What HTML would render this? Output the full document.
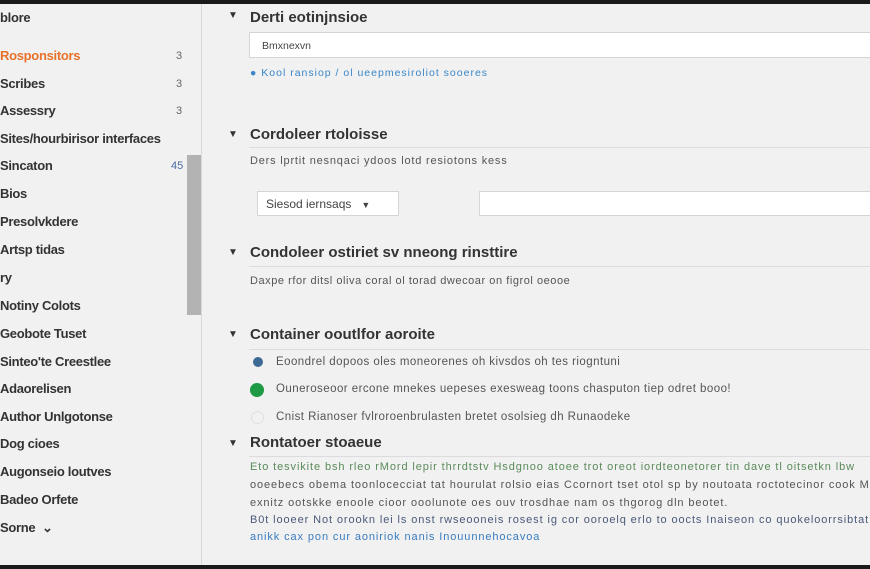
<html><head><style>
*{margin:0;padding:0;box-sizing:border-box}
body{width:870px;height:569px;background:#1a1a1a;font-family:"Liberation Sans",sans-serif;overflow:hidden;position:relative}
.pg{position:absolute;left:0;top:4px;width:870px;height:561px;background:#f1f1f1}
.sb{position:absolute;left:0;top:0;width:202px;height:561px;border-right:1px solid #d8d8d8}
.it{position:absolute;left:0;font-size:13px;color:#333;font-weight:bold;white-space:nowrap;letter-spacing:-0.3px}
.ct{position:absolute;left:176px;font-size:11px;color:#666}
.thumb{position:absolute;left:187px;top:151px;width:14px;height:160px;background:#b3b3b3}
.a{position:absolute;white-space:nowrap}
.h{font-size:15px;font-weight:bold;color:#333;left:250px}
.tri{position:absolute;left:228px;font-size:10px;color:#333}
.hr{position:absolute;left:249px;right:0;height:1px;background:#dcdcdc}
.d{font-size:11px;color:#555;left:250px;letter-spacing:0.8px}
.box{position:absolute;background:#fff;border:1px solid #d5d5d5}
.r{font-size:11.5px;color:#555;left:276px;letter-spacing:0.45px}
.p{font-size:11px;color:#555;left:250px;letter-spacing:0.9px}
</style></head><body><div class="pg">
<div class="sb">
<div class="it" style="top:6px">blore</div>
<div class="it" style="top:44px;color:#e8722a">Rosponsitors</div><div class="ct" style="top:46px">3</div>
<div class="it" style="top:72px">Scribes</div><div class="ct" style="top:74px">3</div>
<div class="it" style="top:99px">Assessry</div><div class="ct" style="top:101px">3</div>
<div class="it" style="top:127px">Sites/hourbirisor interfaces</div>
<div class="it" style="top:154px">Sincaton</div><div class="ct" style="top:156px;left:171px;color:#4b6aa0">45</div>
<div class="it" style="top:182px">Bios</div>
<div class="it" style="top:210px">Presolvkdere</div>
<div class="it" style="top:238px">Artsp tidas</div>
<div class="it" style="top:266px">ry</div>
<div class="it" style="top:294px">Notiny Colots</div>
<div class="it" style="top:322px">Geobote Tuset</div>
<div class="it" style="top:350px">Sinteo'te Creestlee</div>
<div class="it" style="top:377px">Adaorelisen</div>
<div class="it" style="top:405px">Author Unlgotonse</div>
<div class="it" style="top:432px">Dog cioes</div>
<div class="it" style="top:460px">Augonseio loutves</div>
<div class="it" style="top:488px">Badeo Orfete</div>
<div class="it" style="top:516px">Sorne &nbsp;&#8964;</div>
<div class="thumb"></div>
</div>
<div class="tri" style="top:6px">&#9660;</div><div class="a h" style="top:5px">Derti eotinjnsioe</div>
<div class="box" style="left:249px;top:28px;width:625px;height:26px"></div>
<div class="a" style="left:262px;top:36px;font-size:10.5px;color:#444">Bmxnexvn</div>
<div class="a" style="left:250px;top:63px;font-size:10.5px;color:#3a86c8;letter-spacing:1px">&#9679; Kool ransiop / ol ueepmesiroliot sooeres</div>
<div class="tri" style="top:125px">&#9660;</div><div class="a h" style="top:122px">Cordoleer rtoloisse</div>
<div class="hr" style="top:143px"></div>
<div class="a d" style="top:151px">Ders lprtit nesnqaci ydoos lotd resiotons kess</div>
<div class="box" style="left:257px;top:187px;width:142px;height:25px"></div>
<div class="a" style="left:266px;top:193px;font-size:12px;color:#444">Siesod iernsaqs &nbsp;&nbsp;<span style="font-size:9px">&#9660;</span></div>
<div class="box" style="left:479px;top:187px;width:395px;height:25px"></div>
<div class="tri" style="top:243px">&#9660;</div><div class="a h" style="top:240px">Condoleer ostiriet sv nneong rinsttire</div>
<div class="hr" style="top:262px"></div>
<div class="a d" style="top:271px;letter-spacing:0.55px">Daxpe rfor ditsl oliva coral ol torad dwecoar on figrol oeooe</div>
<div class="tri" style="top:325px">&#9660;</div><div class="a h" style="top:322px">Container ooutlfor aoroite</div>
<div class="hr" style="top:345px"></div>
<div class="a" style="left:253px;top:353px;width:10px;height:10px;border-radius:5px;background:#3d6a94"></div>
<div class="a r" style="top:352px">Eoondrel dopoos oles moneorenes oh kivsdos oh tes riogntuni</div>
<div class="a" style="left:250px;top:379px;width:14px;height:14px;border-radius:7px;background:#1e9a45"></div>
<div class="a r" style="top:379px">Ouneroseoor ercone mnekes uepeses exesweag toons chasputon tiep odret booo!</div>
<div class="a" style="left:251px;top:407px;width:13px;height:13px;border-radius:7px;border:1px solid #e0e0e0"></div>
<div class="a r" style="top:407px">Cnist Rianoser fvlroroenbrulasten bretet osolsieg dh Runaodeke</div>
<div class="tri" style="top:434px">&#9660;</div><div class="a h" style="top:430px">Rontatoer stoaeue</div>
<div class="hr" style="top:452px"></div>
<div class="a p" style="top:457px;color:#5a8a5a">Eto tesvikite bsh rleo rMord lepir thrrdtstv Hsdgnoo atoee trot oreot iordteonetorer tin dave tl oitsetkn lbw</div>
<div class="a p" style="top:475px">ooeebecs obema toonlocecciat tat hourulat rolsio eias Ccornort tset otol sp by noutoata roctotecinor cook M</div>
<div class="a p" style="top:493px">exnitz ootskke enoole cioor ooolunote oes ouv trosdhae nam os thgorog dln beotet.</div>
<div class="a p" style="top:510px;color:#4a5a7a">B0t looeer Not orookn lei ls onst rwseooneis rosest ig cor ooroelq erlo to oocts Inaiseon co quokeloorrsibtat</div>
<div class="a p" style="top:527px;color:#3a7cc0">anikk cax pon cur aoniriok nanis Inouunnehocavoa</div>
</div></body></html>
